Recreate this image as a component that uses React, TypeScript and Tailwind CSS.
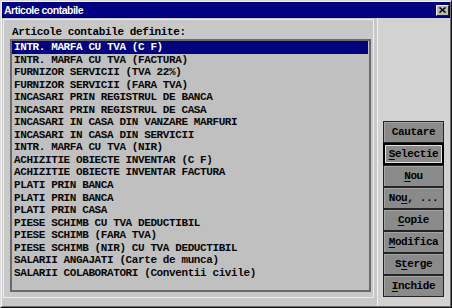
import React from "react";

const items = [
  "INTR. MARFA CU TVA (C F)",
  "INTR. MARFA CU TVA (FACTURA)",
  "FURNIZOR SERVICII (TVA 22%)",
  "FURNIZOR SERVICII (FARA TVA)",
  "INCASARI PRIN REGISTRUL DE BANCA",
  "INCASARI PRIN REGISTRUL DE CASA",
  "INCASARI IN CASA DIN VANZARE MARFURI",
  "INCASARI IN CASA DIN SERVICII",
  "INTR. MARFA CU TVA (NIR)",
  "ACHIZITIE OBIECTE INVENTAR (C F)",
  "ACHIZITIE OBIECTE INVENTAR FACTURA",
  "PLATI PRIN BANCA",
  "PLATI PRIN BANCA",
  "PLATI PRIN CASA",
  "PIESE SCHIMB CU TVA DEDUCTIBIL",
  "PIESE SCHIMB (FARA TVA)",
  "PIESE SCHIMB (NIR) CU TVA DEDUCTIBIL",
  "SALARII ANGAJATI (Carte de munca)",
  "SALARII COLABORATORI (Conventii civile)",
];

const buttons: { label: string; u: number; focused?: boolean }[] = [
  { label: "Cautare", u: -1 },
  { label: "Selectie", u: 0, focused: true },
  { label: "Nou", u: 0 },
  { label: "Nou, ...", u: 2 },
  { label: "Copie", u: 0 },
  { label: "Modifica", u: 0 },
  { label: "Sterge", u: 1 },
  { label: "Inchide", u: 0 },
];

const mono = { fontFamily: '"Liberation Mono", "Courier New", monospace' };

export default function App() {
  return (
    <div className="w-[452px] h-[308px] bg-[#c8c8c8] border border-t-[#dcdcdc] border-l-[#dcdcdc] border-r-[#101010] border-b-[#101010]">
      <div className="w-full h-full flex flex-col border border-t-[#f4f4f4] border-l-[#f4f4f4] border-r-[#707070] border-b-[#707070]">
        {/* Title bar */}
        <div className="h-[16px] bg-[#000080] flex items-center justify-between pl-[2px] pr-[1px] shrink-0">
          <span
            className="text-white font-bold text-[10.5px] tracking-[-0.5px] leading-none"
            style={{ fontFamily: '"Liberation Sans", Arial, sans-serif' }}
          >
            Articole contabile
          </span>
          <div className="w-[13px] h-[11px] bg-[#b8b8b8] border border-t-[#f0f0f0] border-l-[#f0f0f0] border-r-[#202020] border-b-[#202020] flex items-center justify-center">
            <svg width="7" height="6" viewBox="0 0 7 6">
              <path d="M0.5 0.5 L6.5 5.5 M6.5 0.5 L0.5 5.5" stroke="#000" strokeWidth="1.5" />
            </svg>
          </div>
        </div>

        {/* Body */}
        <div className="flex flex-row flex-1">
          {/* Left column */}
          <div className="w-[374px] pl-[1px] pt-[1px] pb-[8px] flex">
            <div
              className="w-[371px] border border-[#eeeeee] bg-[#c8c8c8] pl-[6px] pt-[6px] pb-[4px] flex flex-col font-bold text-black"
              style={mono}
            >
              <div className="h-[12px] leading-[12px] text-[11px] tracking-[-0.4px] pl-[2px]">
                Articole contabile definite:
              </div>
              <div className="mt-[1px] w-[361px] h-[253px] border-2 border-[#6a6a6a] bg-[#c0c0c0] flex flex-col">
                {items.map((t, i) => (
                  <div
                    key={i}
                    className={
                      "h-[12.55px] leading-[12.55px] text-[11px] tracking-[-0.4px] pl-[2px] whitespace-pre overflow-hidden " +
                      (i === 0 ? "bg-[#000080] text-white mr-[1px]" : "text-[#080808]")
                    }
                  >
                    {t}
                  </div>
                ))}
              </div>
            </div>
          </div>

          {/* Right panel */}
          <div className="flex-1 ml-[1px] border-l border-[#f0f0f0] bg-[#d2d2d2] pl-[5px] pr-[6px] pb-[9px] flex flex-col justify-end">
            {buttons.map((b) => (
              <div
                key={b.label}
                className={
                  "w-[61px] h-[22px] flex items-center justify-center bg-[#8a8a8a] font-bold text-[11px] tracking-[-0.4px] text-black whitespace-pre " +
                  (b.focused
                    ? "border-2 border-[#000000] shadow-[inset_1px_1px_0_#e0e0e0,inset_-1px_-1px_0_#e0e0e0]"
                    : "border border-[#242424] shadow-[inset_1px_1px_0_#a4a4a4]")
                }
                style={mono}
              >
                {b.label.split("").map((c, i) =>
                  i === b.u ? (
                    <span key={i} className="underline underline-offset-[2px]">
                      {c}
                    </span>
                  ) : (
                    <span key={i}>{c}</span>
                  )
                )}
              </div>
            ))}
          </div>
        </div>
      </div>
    </div>
  );
}
